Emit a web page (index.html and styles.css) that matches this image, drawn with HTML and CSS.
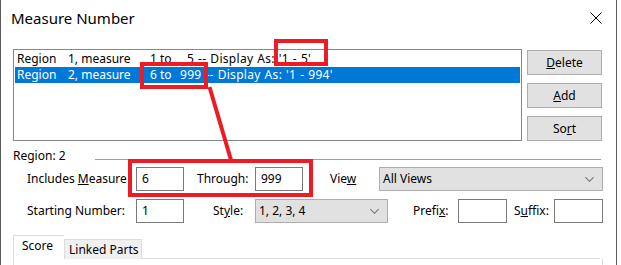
FILE: index.html
```html
<!DOCTYPE html>
<html lang="en">
	<head>
		<meta charset="UTF-8" />
		<title>Measure Number</title>
		<link rel="stylesheet" href="styles.css">
	</head>
	<body>
		<div class="window">
			<div class="titlebar">
				<span class="title">Measure Number</span>
				<svg class="close" width="12" height="12" viewBox="0 0 12 12">
					<path d="M0.5 0.5 L11.5 11.5 M11.5 0.5 L0.5 11.5" stroke="#000" stroke-width="1" fill="none" />
				</svg>
			</div>

			<div class="top">
				<div class="list">
					<div class="row">
						<span class="c-region">Region</span><span class="c-measure">1, measure</span><span class="c-from">1 to</span><span class="c-tail">5 -- Display As: '1 - 5'</span>
					</div>
					<div class="row selected">
						<span class="c-region">Region</span><span class="c-measure">2, measure</span><span class="c-from c-from-2">6 to</span><span class="c-tail">999 -- Display As: '1 - 994'</span>
					</div>
				</div>
				<div class="buttons">
					<button class="btn"><u>D</u>elete</button>
					<button class="btn"><u>A</u>dd</button>
					<button class="btn">So<u>r</u>t</button>
				</div>
			</div>

			<div class="group-title">
				<span>Region: 2</span>
				<div class="rule"></div>
			</div>

			<div class="field-row">
				<label class="lbl lbl-first">Includes <u>M</u>easure</label>
				<div class="input w48">6</div>
				<label class="lbl lbl-through">Through:</label>
				<div class="input w48">999</div>
				<label class="lbl lbl-view">Vie<u>w</u></label>
				<div class="combo w-view">All Views<span class="chev"></span></div>
			</div>

			<div class="field-row">
				<label class="lbl lbl-first">Starting Number:</label>
				<div class="input w48">1</div>
				<label class="lbl lbl-style">St<u>y</u>le:</label>
				<div class="combo w-style">1, 2, 3, 4<span class="chev"></span></div>
				<label class="lbl lbl-prefix">Prefi<u>x</u>:</label>
				<div class="input w49"></div>
				<label class="lbl lbl-suffix">S<u>u</u>ffix:</label>
				<div class="input w49"></div>
			</div>

			<div class="tabs">
				<div class="tab active">Score</div>
				<div class="tab">Linked Parts</div>
				<div class="tab-fill"></div>
			</div>
			<div class="tab-panel"></div>

			<!-- red callouts drawn over the dialog -->
			<svg class="marks" width="617" height="265" viewBox="0 0 617 265">
				<g stroke="#ed1c24" stroke-width="4" fill="none">
					<rect x="276" y="41" width="50" height="23" />
					<rect x="142" y="64" width="64" height="23" />
					<rect x="130" y="161" width="181" height="34" />
					<line x1="209.5" y1="87" x2="231" y2="160" />
				</g>
			</svg>
		</div>
	</body>
</html>
```

FILE: styles.css
```css
body {
	margin: 0;
	background: #fff;
	font-family: "Noto Sans", "Open Sans", sans-serif;
	font-size: 12px;
	color: #000;
}
.window {
	position: relative;
	box-sizing: border-box;
	width: 617px;
	height: 265px;
	overflow: hidden;
	border-left: 1px solid #5a5a5a;
	border-right: 1px solid #5a5a5a;
	background: #fff;
}
.titlebar {
	box-sizing: border-box;
	height: 36px;
	padding: 8px 0 0 10px;
	display: flex;
	align-items: flex-start;
}
.title {
	font-size: 15px;
	line-height: 20px;
}
.close {
	margin-left: auto;
	margin-right: 14px;
	margin-top: 4px;
}
.top {
	display: flex;
	margin-top: 13px;
	padding-left: 12px;
}
.list {
	box-sizing: border-box;
	width: 509px;
	height: 92px;
	border: 1px solid #828790;
	padding: 1px;
}
.row {
	display: flex;
	height: 16px;
	line-height: 16px;
	padding-left: 2px;
	white-space: pre;
}
.row.selected {
	background: #0078d7;
	color: #fff;
}
.c-region { width: 51px; }
.c-measure { width: 82px; }
.c-from { width: 37px; }
.c-from-2 { width: 30px; }
.c-tail { letter-spacing: 0.3px; word-spacing: 0.5px; }
.buttons {
	display: flex;
	flex-direction: column;
	gap: 8px;
	margin-left: 5px;
	padding-top: 1px;
}
.btn {
	box-sizing: border-box;
	width: 75px;
	height: 25px;
	border: 1px solid #adadad;
	background: #e1e1e1;
	font-family: inherit;
	font-size: 12px;
	padding: 0;
	color: #000;
}
.group-title {
	display: flex;
	margin-top: 7px;
	padding-left: 12px;
	line-height: 16px;
}
.rule {
	width: 506px;
	margin-left: auto;
	margin-right: 15px;
	margin-top: 11px;
	height: 0;
	border-top: 1px solid #a0a0a0;
}
.field-row {
	display: flex;
	align-items: center;
	height: 24px;
	margin-top: 8px;
	padding-left: 26px;
}
.group-title + .field-row {
	margin-top: 3px;
}
.lbl {
	line-height: 16px;
	white-space: nowrap;
}
.lbl-first { width: 109px; }
.lbl-through { margin-left: 13px; width: 58px; }
.lbl-view { margin-left: 27px; width: 49px; }
.lbl-style { margin-left: 29px; width: 42px; }
.lbl-prefix { margin-left: 25px; width: 45px; }
.lbl-suffix { margin-left: 7px; width: 40px; }
.input {
	box-sizing: border-box;
	height: 24px;
	border: 1px solid #7a7a7a;
	padding: 0 0 0 5px;
	line-height: 22px;
	background: #fff;
}
.w48 { width: 48px; }
.w49 { width: 49px; }
.combo {
	box-sizing: border-box;
	height: 24px;
	border: 1px solid #adadad;
	background: #e1e1e1;
	padding-left: 3px;
	line-height: 22px;
	display: flex;
}
.w-view { width: 224px; }
.w-style { width: 133px; }
.chev {
	margin-left: auto;
	margin-right: 9px;
	margin-top: 6px;
	width: 6px;
	height: 6px;
	border-right: 1px solid #707070;
	border-bottom: 1px solid #707070;
	transform: rotate(45deg) scale(0.9);
}
.tabs {
	display: flex;
	align-items: flex-end;
	margin-top: 12px;
	padding-left: 12px;
	height: 24px;
}
.tab {
	box-sizing: border-box;
	height: 20px;
	padding: 0 0 0 4px;
	line-height: 20px;
	border: 1px solid #dcdcdc;
	border-bottom: none;
	background: #f0f0f0;
	white-space: nowrap;
	width: 78px;
}
.tab.active {
	height: 24px;
	width: 51px;
	padding-left: 8px;
	background: #fff;
	border-right: none;
	line-height: 20px;
}
.tab-fill {
	width: 458px;
	border-bottom: 1px solid #dcdcdc;
	height: 0;
}
.tab-panel {
	margin-left: 12px;
	width: 588px;
	height: 20px;
	border-left: 1px solid #dcdcdc;
	border-right: 1px solid #dcdcdc;
}
.marks {
	position: absolute;
	left: -1px;
	top: 0;
}
```
